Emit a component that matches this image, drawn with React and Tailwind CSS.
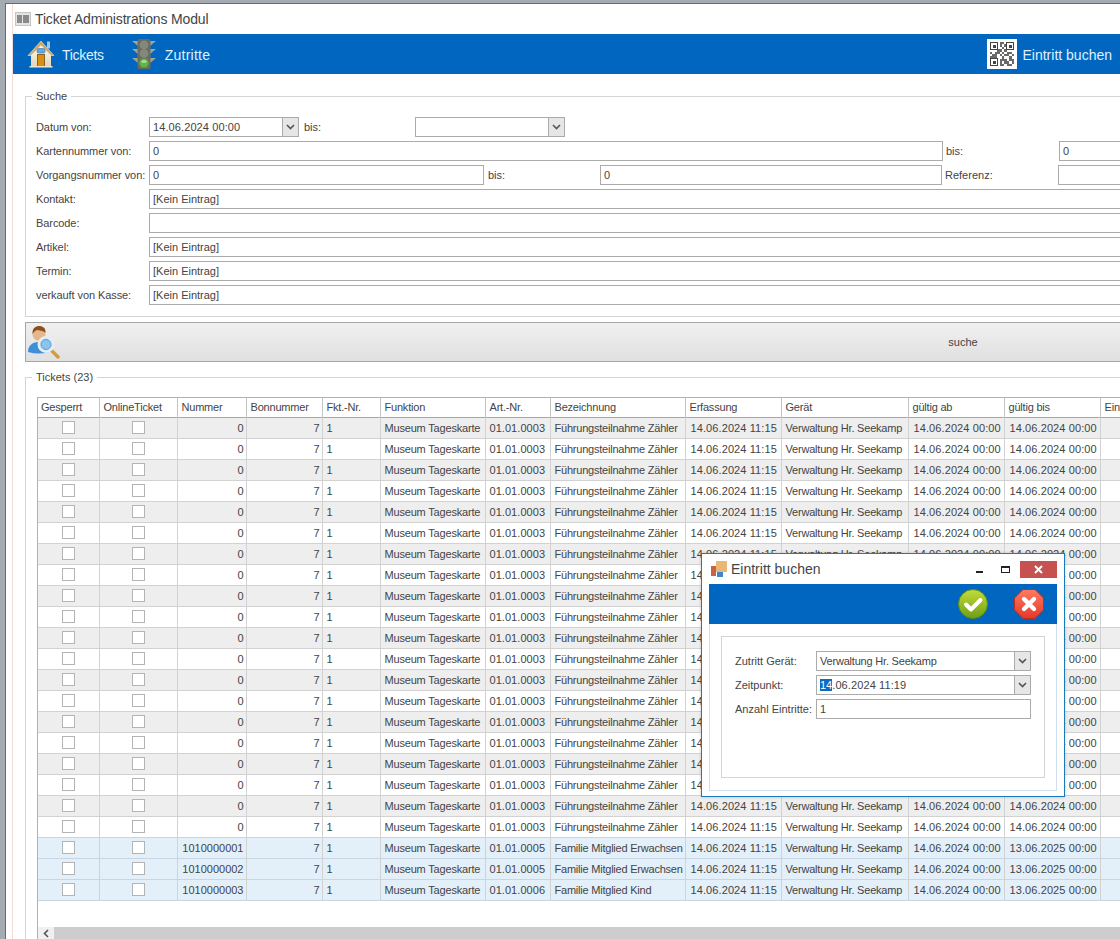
const fixedCells = {
  kasse: "Museum Tageskarte",
  erfassung: "14.06.2024 11:15",
  geraet: "Verwaltung Hr. Seekamp",
  ab: "14.06.2024 00:00",
};

const rows = [
  ...Array.from({ length: 20 }, () => ({ nummer: "0", art: "01.01.0003", bez: "Führungsteilnahme Zähler", bis: "14.06.2024 00:00", blue: false })),
  { nummer: "1010000001", art: "01.01.0005", bez: "Familie Mitglied Erwachsen", bis: "13.06.2025 00:00", blue: true },
  { nummer: "1010000002", art: "01.01.0005", bez: "Familie Mitglied Erwachsen", bis: "13.06.2025 00:00", blue: true },
  { nummer: "1010000003", art: "01.01.0006", bez: "Familie Mitglied Kind", bis: "13.06.2025 00:00", blue: true },
];

const headers = ["Gesperrt", "OnlineTicket", "Nummer", "Bonnummer", "Fkt.-Nr.", "Funktion", "Art.-Nr.", "Bezeichnung", "Erfassung", "Gerät", "gültig ab", "gültig bis", "Eintritte"];

function Chevron() {
  return (
    <svg width="9" height="6" viewBox="0 0 9 6">
      <path d="M1 1 L4.5 4.5 L8 1" fill="none" stroke="#555" strokeWidth="1.6" />
    </svg>
  );
}

function Combo({ width, children }) {
  return (
    <div className={`flex h-5 shrink-0 items-center border border-[#ababab] bg-white ${width}`}>
      <span className="flex-1 whitespace-nowrap pl-[3px]">{children}</span>
      <span className="flex h-full w-4 items-center justify-center border-l border-[#ababab] bg-[#e6e6e6]">
        <Chevron />
      </span>
    </div>
  );
}

function Field({ width, children }) {
  return (
    <div className={`flex h-5 shrink-0 items-center whitespace-nowrap border border-[#ababab] bg-white pl-[3px] ${width}`}>
      {children}
    </div>
  );
}

function FormRow({ label, children }) {
  return (
    <div className="flex h-5 items-center">
      <span className="w-[113px] shrink-0 whitespace-nowrap tracking-[-0.08px]">{label}</span>
      {children}
    </div>
  );
}

function HouseIcon() {
  return (
    <svg width="28" height="28" viewBox="0 0 28 28">
      <defs>
        <linearGradient id="wall" x1="0" y1="0" x2="0" y2="1">
          <stop offset="0" stopColor="#fffdf2" />
          <stop offset="1" stopColor="#e2d6ba" />
        </linearGradient>
      </defs>
      <rect x="20" y="1.5" width="3" height="7" fill="#9cc8ec" />
      <path d="M4 14 L14 4 L24 14 V26.5 H4 Z" fill="url(#wall)" />
      <path d="M1 15.5 L14 1 L27 15.5 L24 15.5 L14 5.5 L4 15.5 Z" fill="#cfa76a" stroke="#fff3d8" strokeWidth="0.5" />
      <rect x="10" y="8.5" width="8" height="4.5" rx="1.5" fill="#6aa7dc" stroke="#3f7fb8" strokeWidth="0.7" />
      <rect x="10.5" y="14.5" width="7" height="12" fill="#d9900f" stroke="#7e5a20" strokeWidth="0.9" />
      <rect x="2.5" y="26" width="23" height="1.5" fill="#f0e6cf" />
    </svg>
  );
}

function TrafficLightIcon() {
  return (
    <svg width="26" height="32" viewBox="0 0 26 32">
      <path d="M1 3 H7 V8 Z M25 3 H19 V8 Z M1 11 H7 V16 Z M25 11 H19 V16 Z M1 20 H7 V25 Z M25 20 H19 V25 Z" fill="#a5a58c" />
      <rect x="6.5" y="1" width="13" height="30" rx="2" fill="#6a6c60" />
      <circle cx="13" cy="7" r="4.4" fill="#85867c" />
      <circle cx="13" cy="15.5" r="4.4" fill="#85867c" />
      <circle cx="13" cy="25" r="4.6" fill="#5fb548" />
      <ellipse cx="13" cy="23.6" rx="2.8" ry="1.5" fill="#a6e08e" />
    </svg>
  );
}

function QrIcon() {
  const bits = ["1110110111", "1010101101", "1110010111", "0001101000", "1011010110", "0110101101", "1110010010", "1010111011", "1110101101", "0000110110"];
  return (
    <div className="flex h-[30px] w-[30px] shrink-0 items-center justify-center bg-white">
      <svg width="24" height="24" viewBox="0 0 24 24" shapeRendering="crispEdges">
        {bits.map((line, y) =>
          line.split("").map((b, x) =>
            b === "1" ? <rect key={`${x}-${y}`} x={x * 2.4} y={y * 2.4} width="2.4" height="2.4" fill="#6a6a6a" /> : null
          )
        )}
        <path d="M0.5 0.5 H7.5 V7.5 H0.5 Z M16.5 0.5 H23.5 V7.5 H16.5 Z M0.5 16.5 H7.5 V23.5 H0.5 Z" fill="#fff" stroke="#444" />
        <path d="M2.5 2.5 H5.5 V5.5 H2.5 Z M18.5 2.5 H21.5 V5.5 H18.5 Z M2.5 18.5 H5.5 V21.5 H2.5 Z" fill="#444" />
      </svg>
    </div>
  );
}

function UserSearchIcon() {
  return (
    <svg width="34" height="34" viewBox="0 0 34 34">
      <path d="M1 27 C1 20 6 17 12 17 C18 17 22 20 22 27 Q12 30 1 27 Z" fill="#3d8fd8" />
      <circle cx="12" cy="9.5" r="6.5" fill="#e7b68d" />
      <path d="M5.5 9 C5 3 9 1 12 1 C16 1 19 3 18.5 8 C16 5 12 6 10 5 C8 6 6.5 7 5.5 9 Z" fill="#8d4f1e" />
      <path d="M23 24 L31 32" stroke="#d99a3f" strokeWidth="3.4" strokeLinecap="round" />
      <circle cx="19" cy="19.5" r="7.5" fill="#cfe8f8" stroke="#e8eef2" strokeWidth="2" />
      <circle cx="19" cy="19.5" r="5" fill="#8cc4ec" stroke="#4a8fc8" strokeWidth="0.8" />
    </svg>
  );
}

function OkIcon() {
  return (
    <svg width="30" height="30" viewBox="0 0 30 30">
      <defs>
        <linearGradient id="okfill" x1="0" y1="0" x2="0" y2="1">
          <stop offset="0" stopColor="#c3dc3a" />
          <stop offset="1" stopColor="#6f9e14" />
        </linearGradient>
      </defs>
      <circle cx="15" cy="15" r="14.5" fill="url(#okfill)" stroke="#5d8a10" />
      <path d="M8 15.5 L13 20.5 L22.5 11" fill="none" stroke="#fff" strokeWidth="4" strokeLinecap="round" strokeLinejoin="round" />
    </svg>
  );
}

function CancelIcon() {
  return (
    <svg width="30" height="30" viewBox="0 0 30 30">
      <defs>
        <linearGradient id="nofill" x1="0" y1="0" x2="0" y2="1">
          <stop offset="0" stopColor="#ff7a60" />
          <stop offset="1" stopColor="#e5382c" />
        </linearGradient>
      </defs>
      <path d="M9 0.5 H21 L29.5 9 V21 L21 29.5 H9 L0.5 21 V9 Z" fill="url(#nofill)" stroke="#b9301f" />
      <path d="M10 10 L20 20 M20 10 L10 20" stroke="#fff" strokeWidth="4.4" strokeLinecap="round" />
    </svg>
  );
}

function AppBarcodeIcon() {
  return (
    <svg width="16" height="14" viewBox="0 0 16 14" shapeRendering="crispEdges">
      <rect x="0.5" y="0.5" width="15" height="13" fill="#e4e4e4" stroke="#c4c4c4" />
      <path d="M3 3 V11 M5 3 V11 M6.5 3 V11 M9 3 V11 M11 3 V11 M13 3 V11" stroke="#8a8a8a" strokeWidth="1.2" />
    </svg>
  );
}

function DialogIcon() {
  return (
    <svg width="17" height="17" viewBox="0 0 17 17" shapeRendering="crispEdges">
      <rect x="0" y="5" width="5" height="10" fill="#c8634a" />
      <rect x="5" y="0" width="11" height="11" fill="#e9b877" />
      <rect x="6" y="11" width="6" height="5" fill="#3f86cf" />
    </svg>
  );
}

function Checkbox() {
  return <span className="mx-auto block h-[13px] w-[13px] border border-[#b4b4b4] bg-white" />;
}

// every text cell sits a pixel low in the row
const cell = "overflow-hidden whitespace-nowrap border-r border-[#d2d2d2] pt-[2px]";

function TicketTable() {
  return (
    <table className="w-[1162px] table-fixed border-collapse">
      <colgroup>
        <col className="w-[61px]" />
        <col className="w-[78px]" />
        <col className="w-[69px]" />
        <col className="w-[76px]" />
        <col className="w-[58px]" />
        <col className="w-[105px]" />
        <col className="w-[65px]" />
        <col className="w-[135px]" />
        <col className="w-[96px]" />
        <col className="w-[127px]" />
        <col className="w-[96px]" />
        <col className="w-[96px]" />
        <col className="w-[100px]" />
      </colgroup>
      <thead>
        <tr className="h-[19px] border-b border-[#a8a8a8]">
          {headers.map((h, i) => (
            <th key={h} className={`overflow-hidden whitespace-nowrap border-r border-[#c4c4c4] pt-px text-left font-normal tracking-[-0.2px] ${i === 0 ? "pl-[3px]" : "pl-[4px]"}`}>
              {h}
            </th>
          ))}
        </tr>
      </thead>
      <tbody>
        {rows.map((r, i) => {
          const bg = r.blue ? "bg-[#e3eff9] border-[#c6d6e4]" : i % 2 === 0 ? "bg-[#eeeeee] border-[#d2d2d2]" : "bg-white border-[#d2d2d2]";
          return (
            <tr key={i} className={`h-[21px] border-b ${bg}`}>
              <td className="border-r border-[#d2d2d2]"><Checkbox /></td>
              <td className="border-r border-[#d2d2d2]"><Checkbox /></td>
              <td className={`${cell} pr-[2px] text-right`}>{r.nummer}</td>
              <td className={`${cell} pr-[2px] text-right`}>7</td>
              <td className={`${cell} pl-[4px]`}>1</td>
              <td className={`${cell} pl-[4px] tracking-[-0.18px]`}>{fixedCells.kasse}</td>
              <td className={`${cell} pl-[4px] tracking-[0.05px]`}>{r.art}</td>
              <td className={`${cell} pl-[4px] tracking-[-0.22px]`}>{r.bez}</td>
              <td className={`${cell} pl-[5px] tracking-[0.1px]`}>{fixedCells.erfassung}</td>
              <td className={`${cell} pl-[4px] tracking-[-0.2px]`}>{fixedCells.geraet}</td>
              <td className={`${cell} pl-[5px] tracking-[0.1px]`}>{fixedCells.ab}</td>
              <td className={`${cell} pl-[5px] tracking-[0.1px]`}>{r.bis}</td>
              <td />
            </tr>
          );
        })}
      </tbody>
    </table>
  );
}

function EintrittDialog() {
  return (
    <div className="absolute left-[701px] top-[553px] flex h-[244px] w-[364px] flex-col border border-[#1b7bb8] bg-white px-[7px] pb-[5px] shadow-[0_0_3px_rgba(0,0,0,0.2)]">
      <div className="flex h-[30px] shrink-0 items-center">
        <span className="ml-[2px]"><DialogIcon /></span>
        <span className="ml-[3px] text-[14px] text-[#444]">Eintritt buchen</span>
        <span className="ml-auto h-[2px] w-[7px] translate-y-[3px] bg-[#222]" />
        <span className="ml-[18px] h-[7px] w-[9px] border border-t-2 border-[#222]" />
        <span className="ml-[10px] flex h-[17px] w-[37px] items-center justify-center bg-[#c75050]">
          <svg width="9" height="9" viewBox="0 0 9 9"><path d="M1 1 L8 8 M8 1 L1 8" stroke="#fff" strokeWidth="2" /></svg>
        </span>
      </div>
      <div className="flex h-[40px] shrink-0 items-center bg-[#0066bf]">
        <span className="ml-[249px]"><OkIcon /></span>
        <span className="ml-[26px]"><CancelIcon /></span>
      </div>
      <div className="flex-1 border-x border-b border-[#cfe0ec] px-[11px] pt-[12px]">
        <div className="flex h-[142px] flex-col gap-1 border border-[#d4d4d4] px-[13px] pt-[14px]">
          <div className="flex h-5 items-center">
            <span className="w-[81px] shrink-0">Zutritt Gerät:</span>
            <Combo width="w-[215px]"><span className="tracking-[-0.2px]">Verwaltung Hr. Seekamp</span></Combo>
          </div>
          <div className="flex h-5 items-center">
            <span className="w-[81px] shrink-0">Zeitpunkt:</span>
            <Combo width="w-[215px]"><span className="bg-[#0a6cc8] text-white">14</span><span className="tracking-[0.1px]">.06.2024 11:19</span></Combo>
          </div>
          <div className="flex h-5 items-center">
            <span className="w-[81px] shrink-0 whitespace-nowrap">Anzahl Eintritte:</span>
            <Field width="w-[215px]">1</Field>
          </div>
        </div>
      </div>
    </div>
  );
}

export default function App() {
  return (
    <div className="relative h-[939px] w-[1120px] overflow-hidden bg-[#a4abb2] pl-[5px] pt-[3px] font-['Liberation_Sans',sans-serif] text-[11px] leading-[13px] text-[#444]">
      <div className="h-[936px] w-[1115px] border-l border-t border-[#2b7cb0] bg-white">
        <div className="ml-[6px] h-full border-l border-[#f3dcd6]">
          <div className="flex h-[30px] items-center">
            <span className="ml-[2px]"><AppBarcodeIcon /></span>
            <span className="ml-[4px] text-[14px] leading-none tracking-[-0.15px] text-[#444]">Ticket Administrations Modul</span>
          </div>
          <div className="flex h-10 items-center bg-[#0066bf] text-[14px] text-[#dff1ff]">
            <span className="ml-[14px]"><HouseIcon /></span>
            <span className="ml-[7px] pt-[2px] tracking-[-0.3px]">Tickets</span>
            <span className="ml-[27px]"><TrafficLightIcon /></span>
            <span className="ml-[8px] pt-[2px] tracking-[0.25px]">Zutritte</span>
            <div className="ml-auto flex items-center pr-[8px]">
              <QrIcon />
              <span className="ml-[6px] pt-[2px]">Eintritt buchen</span>
            </div>
          </div>

          <div className="ml-3 w-[1876px] pt-[16px]">
            <fieldset className="h-[227px] border border-[#d4d4d4] pl-[10px]">
              <legend className="ml-[-4px] px-[4px] leading-[13px]">Suche</legend>
              <div className="mt-[14px] flex flex-col gap-1">
                <FormRow label="Datum von:">
                  <Combo width="w-[150px]"><span className="tracking-[0.1px]">14.06.2024 00:00</span></Combo>
                  <span className="ml-[5px] w-[111px]">bis:</span>
                  <Combo width="w-[150px]"> </Combo>
                </FormRow>
                <FormRow label="Kartennummer von:">
                  <Field width="w-[794px]">0</Field>
                  <span className="ml-[3px] w-[113px]">bis:</span>
                  <Field width="w-[200px]">0</Field>
                </FormRow>
                <FormRow label="Vorgangsnummer von:">
                  <Field width="w-[335px]">0</Field>
                  <span className="ml-[4px] w-[112px]">bis:</span>
                  <Field width="w-[342px]">0</Field>
                  <span className="ml-[3px] w-[113px]">Referenz:</span>
                  <Field width="w-[200px]"> </Field>
                </FormRow>
                <FormRow label="Kontakt:"><Field width="w-[1600px]">[Kein Eintrag]</Field></FormRow>
                <FormRow label="Barcode:"><Field width="w-[1600px]"> </Field></FormRow>
                <FormRow label="Artikel:"><Field width="w-[1600px]">[Kein Eintrag]</Field></FormRow>
                <FormRow label="Termin:"><Field width="w-[1600px]">[Kein Eintrag]</Field></FormRow>
                <FormRow label="verkauft von Kasse:"><Field width="w-[1600px]">[Kein Eintrag]</Field></FormRow>
              </div>
            </fieldset>

            <div className="mt-[5px] flex h-10 items-center border border-[#a6a6a6] bg-gradient-to-b from-[#f0f0f0] to-[#e0e0e0]">
              <span className="ml-[1px] w-[36px]"><UserSearchIcon /></span>
              <span className="flex-1 text-center">suche</span>
              <span className="w-[37px]" />
            </div>

            <fieldset className="mt-[9px] h-[600px] border border-[#d4d4d4] pl-[11px]">
              <legend className="ml-[-5px] px-[4px] leading-[13px]">Tickets (23)</legend>
              <div className="mt-[13px] flex h-[542px] w-[1090px] flex-col overflow-hidden border-l border-t border-[#b0b0b0]">
                <div className="flex-1 overflow-hidden"><TicketTable /></div>
                <div className="flex h-[12px] shrink-0 bg-[#cdcdcd]">
                  <span className="flex w-[16px] items-center justify-center bg-[#f0f0f0] text-[#555]">
                    <svg width="6" height="9" viewBox="0 0 6 9"><path d="M5 1 L1.5 4.5 L5 8" fill="none" stroke="#555" strokeWidth="1.6" /></svg>
                  </span>
                </div>
              </div>
            </fieldset>
          </div>
        </div>
      </div>
      <EintrittDialog />
    </div>
  );
}
